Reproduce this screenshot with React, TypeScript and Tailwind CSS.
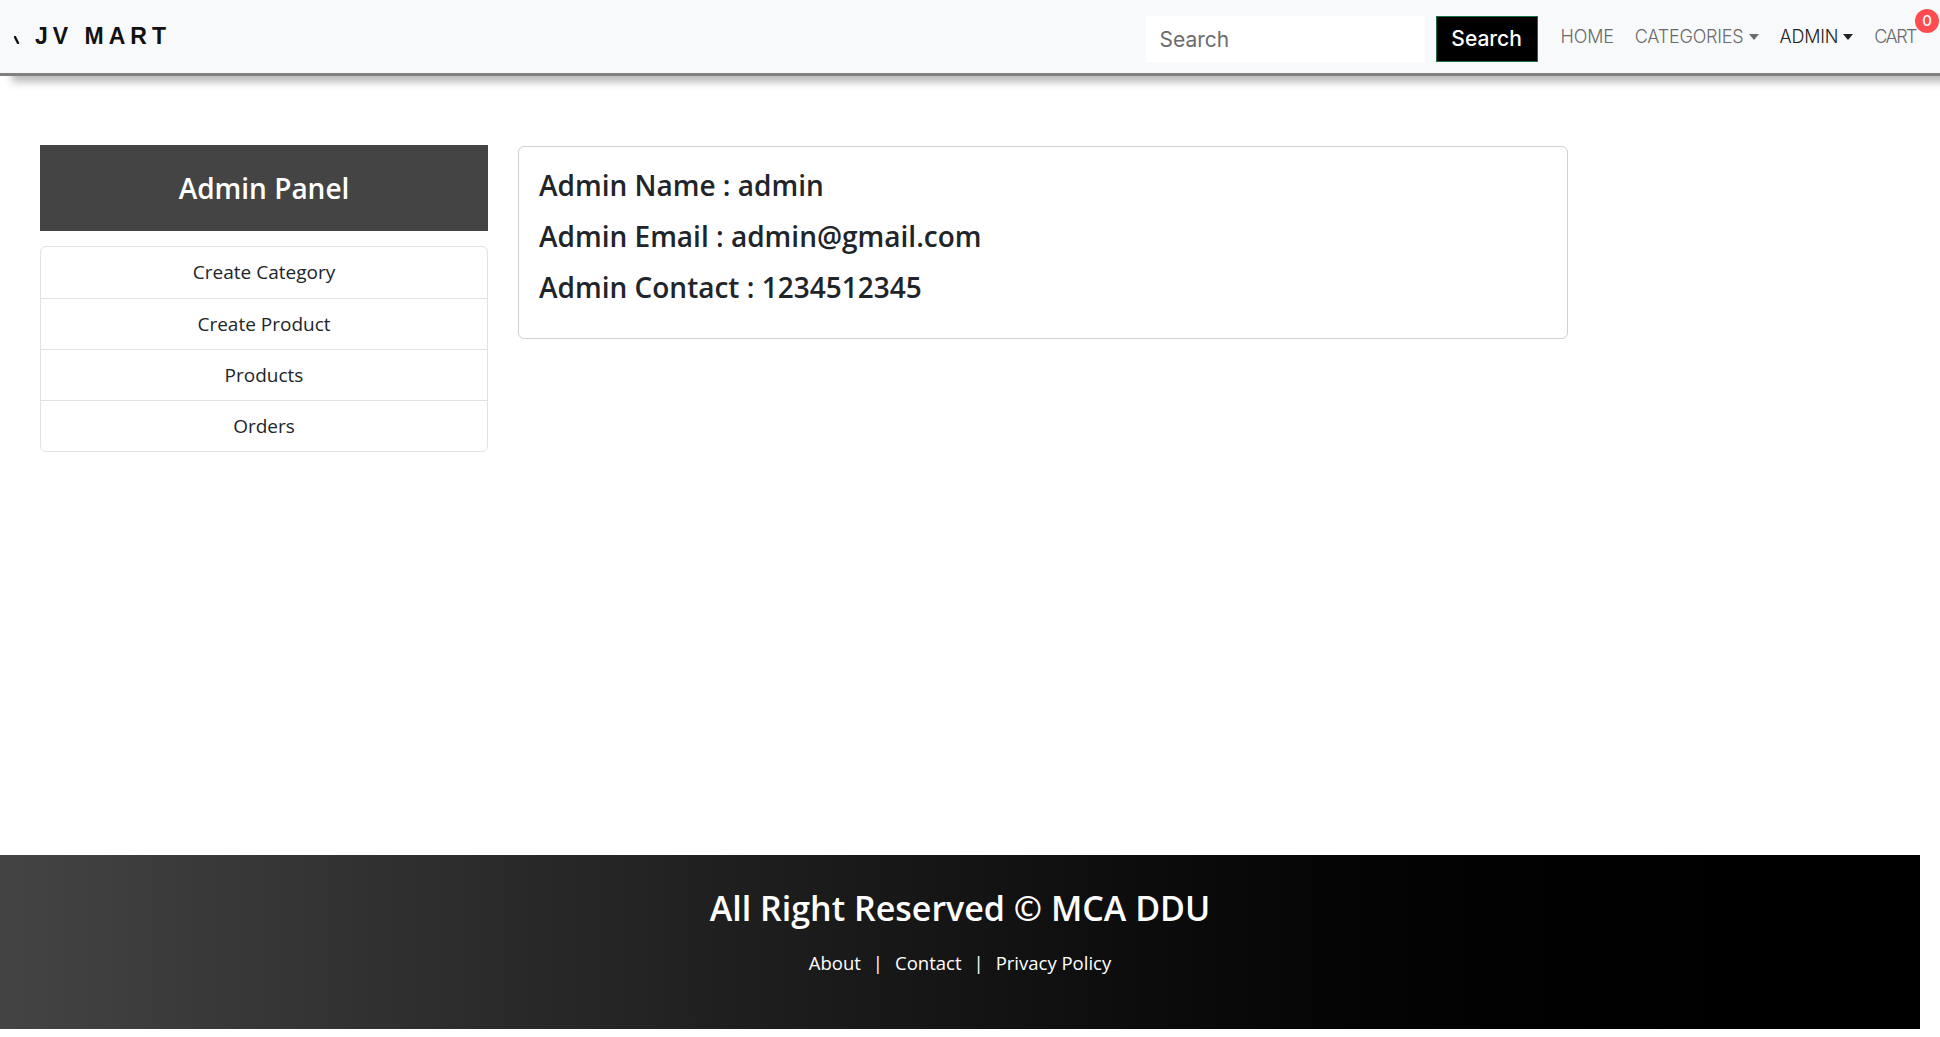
import { useState } from "react";

const navLinks = [
  { text: "HOME", caret: false, active: false },
  { text: "CATEGORIES", caret: true, active: false },
  { text: "ADMIN", caret: true, active: true },
];

const adminMenu = ["Create Category", "Create Product", "Products", "Orders"];

const Caret = () => (
  <svg width="10" height="6" viewBox="0 0 10 6" className="ml-[5px]">
    <path d="M0 0h10L5 6z" fill="currentColor" />
  </svg>
);

const Header = () => {
  const [query, setQuery] = useState("");

  return (
    <header className="relative z-10 h-[76px] bg-[#f8f9fa] border-b-[3px] border-[#808080] shadow-[12px_6px_8px_rgba(0,0,0,0.28)]">
      <nav className="h-full flex items-center justify-between pl-[14px] pr-[6px]">
        {/* logo, the icon is mostly cut off */}
        <a href="/" className="flex items-center">
          <svg width="6" height="8" viewBox="0 0 6 8" className="mt-[6px]">
            <path d="M1 1l3 6" stroke="#111" strokeWidth="2.4" strokeLinecap="round" />
          </svg>
          <span className="ml-[15px] text-[23px] font-bold tracking-[5px] text-[#111] font-['Liberation_Sans',Arial,sans-serif]">
            JV MART
          </span>
        </a>

        <div className="flex items-center font-['Inter',sans-serif]">
          <form className="flex items-center gap-[11px] mr-[23px] mt-[5px]" onSubmit={(e) => e.preventDefault()}>
            <input
              value={query}
              onChange={(e) => setQuery(e.target.value)}
              placeholder="Search"
              className="w-[279px] h-[46px] bg-white px-[14px] text-[21px] text-[#333] placeholder:text-[#6c6c6c] outline-none"
            />
            <button className="w-[102px] h-[46px] bg-black border border-[#1d6b43] text-white text-[21px] font-medium">
              Search
            </button>
          </form>

          <ul className="flex items-center gap-[21px] text-[18px] font-light">
            {navLinks.map((link) => (
              <li
                key={link.text}
                className={`flex items-center tracking-[-0.2px] ${link.active ? "text-[#222]" : "text-[#6a6a6a]"}`}
              >
                {link.text}
                {link.caret && <Caret />}
              </li>
            ))}
            <li className="relative text-[#6a6a6a] tracking-[-1.5px] pr-[18px]">
              CART
              <span className="absolute -top-[14px] right-[-5px] w-[24px] h-[24px] rounded-full bg-[#ff4d4f] text-white text-[15px] font-medium tracking-normal flex items-center justify-center">
                0
              </span>
            </li>
          </ul>
        </div>
      </nav>
    </header>
  );
};

const Sidebar = () => (
  <aside className="w-[448px] shrink-0">
    <div className="h-[86px] bg-[#444] flex items-center justify-center">
      <h4 className="text-white text-[28px] font-semibold">Admin Panel</h4>
    </div>
    <ul className="mt-[15px] border border-[#dee2e6] rounded-[6px] bg-white">
      {adminMenu.map((item, i) => (
        <li
          key={item}
          className={`h-[51px] flex items-center justify-center text-[19px] text-[#212529] ${i > 0 ? "border-t border-[#dee2e6]" : ""}`}
        >
          {item}
        </li>
      ))}
    </ul>
  </aside>
);

const AdminCard = () => (
  <div className="w-[1050px] h-[193px] mt-[1px] border border-[#d0d0d0] rounded-[6px] px-[20px] pt-[21px] text-[#212529]">
    <h3 className="text-[28px] font-semibold leading-[34px] mb-[17px]">Admin Name : admin</h3>
    <h3 className="text-[28px] font-semibold leading-[34px] mb-[17px]">Admin Email : admin@gmail.com</h3>
    <h3 className="text-[28px] font-semibold leading-[34px]">Admin Contact : 1234512345</h3>
  </div>
);

const Footer = () => (
  <footer className="w-[1920px] h-[174px] bg-gradient-to-r from-[#444] to-black text-white flex flex-col items-center pt-[26px]">
    <h1 className="text-[34px] font-semibold leading-[54px]">All Right Reserved © MCA DDU</h1>
    <p className="mt-[14px] text-[18.5px] flex items-center">
      <a href="#">About</a>
      <span className="mx-[12px]">|</span>
      <a href="#">Contact</a>
      <span className="mx-[12px]">|</span>
      <a href="#">Privacy Policy</a>
    </p>
  </footer>
);

export default function App() {
  return (
    <div className="w-[1940px] min-h-[1037px] bg-white font-['Open_Sans','Noto_Sans',sans-serif]">
      <Header />
      <main className="h-[779px] flex gap-[30px] pl-[40px] pt-[69px]">
        <Sidebar />
        <AdminCard />
      </main>
      <Footer />
    </div>
  );
}
